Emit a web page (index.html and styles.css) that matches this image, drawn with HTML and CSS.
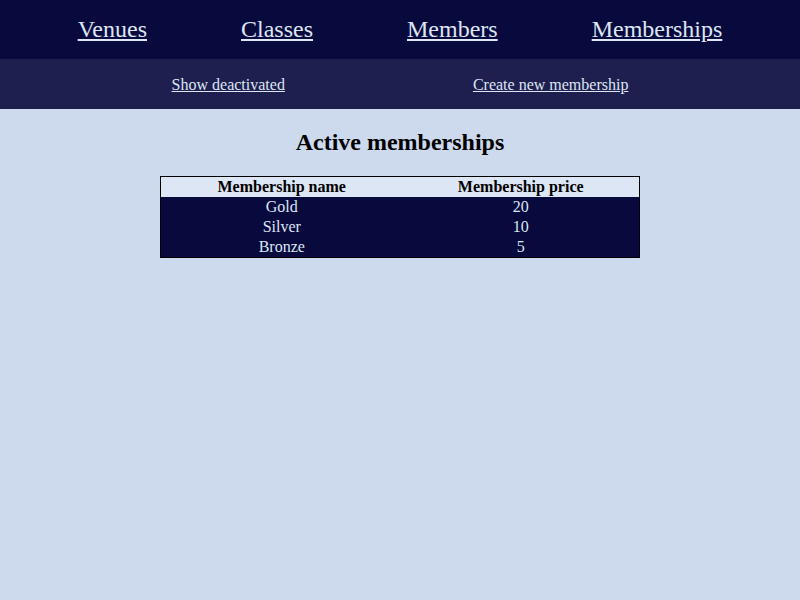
FILE: index.html
```html
<!DOCTYPE html>
<html>
<head>
<meta charset="utf-8">
<link rel="stylesheet" href="styles.css">
</head>
<body>
<nav class="main-nav">
  <a href="#">Venues</a>
  <a href="#">Classes</a>
  <a href="#">Members</a>
  <a href="#">Memberships</a>
</nav>
<nav class="sub-nav">
  <a href="#">Show deactivated</a>
  <a href="#">Create new membership</a>
</nav>
<main class="content">
  <h2 class="title">Active memberships</h2>
  <table class="memberships">
    <thead>
      <tr><th>Membership name</th><th>Membership price</th></tr>
    </thead>
    <tbody>
      <tr><td>Gold</td><td>20</td></tr>
      <tr><td>Silver</td><td>10</td></tr>
      <tr><td>Bronze</td><td>5</td></tr>
    </tbody>
  </table>
</main>
</body>
</html>
```
FILE: styles.css
```css
html, body {
  margin: 0;
  padding: 0;
}
body {
  background: #cdd9ed;
  font-family: "Liberation Serif", "Times New Roman", serif;
  color: #000;
  min-height: 600px;
}
.main-nav {
  background: #080a3e;
  height: 59px;
  display: flex;
  justify-content: center;
  align-items: center;
  gap: 94px;
}
.main-nav a {
  color: #dde6f4;
  font-size: 24px;
}
.sub-nav {
  background: #1e1f4f;
  height: 50px;
  display: flex;
  justify-content: center;
  align-items: center;
  gap: 188px;
  padding-top: 1px;
  box-sizing: border-box;
}
.sub-nav a {
  color: #dde6f4;
  font-size: 16px;
}
.content {
  display: flex;
  flex-direction: column;
  align-items: center;
}
.title {
  font-size: 24px;
  margin: 20px 0;
}
.memberships {
  width: 480px;
  border: 1px solid #000;
  border-collapse: collapse;
  font-size: 16px;
}
.memberships th {
  background: #dde6f4;
  padding: 1px;
}
.memberships td {
  background: #080a3e;
  color: #dde6f4;
  text-align: center;
  padding: 1px;
}
```
